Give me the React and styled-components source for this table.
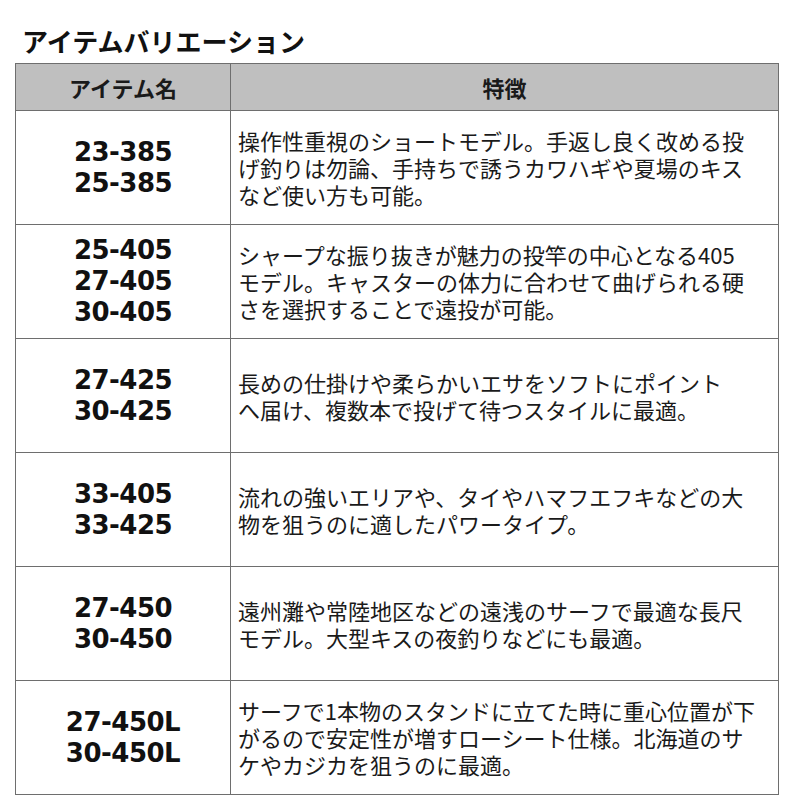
import styled, { createGlobalStyle } from 'styled-components';

const GlobalStyle = createGlobalStyle`
  body {
    margin: 0;
    background: #fff;
    font-family: 'Noto Sans CJK JP', 'Noto Sans', sans-serif;
    color: #111;
  }
`;

const Page = styled.div`
  width: 800px;
  padding: 26px 21px 0 15px;
  box-sizing: border-box;
`;

const Title = styled.h2`
  margin: 0 0 7px 7px;
  font-size: 26px;
  line-height: 30px;
  font-weight: 700;
  color: #111;
  letter-spacing: 0;
`;

const Table = styled.table`
  width: 764px;
  border-collapse: collapse;
  table-layout: fixed;
  border: 1px solid #6e6e6e;
`;

const HeadCell = styled.th`
  height: 46px;
  padding: 0;
  background: #bfbfbf;
  border: 1px solid #6e6e6e;
  font-size: 22px;
  font-weight: 700;
  color: #1a1a1a;
  text-align: center;
  vertical-align: middle;
  width: ${(p) => p.$width || 'auto'};
`;

const NameCell = styled.td`
  height: 113px;
  padding: 0;
  border: 1px solid #6e6e6e;
  text-align: center;
  vertical-align: middle;
`;

const ModelName = styled.div`
  font-family: 'DejaVu Sans', Verdana, sans-serif;
  font-weight: 700;
  font-size: 26px;
  letter-spacing: -0.5px;
  line-height: 31px;
  color: #111;
`;

const DescCell = styled.td`
  padding: 0 0 0 7px;
  border: 1px solid #6e6e6e;
  vertical-align: middle;
  text-align: left;
`;

const DescLine = styled.div`
  font-size: 22px;
  line-height: 27px;
  color: #1a1a1a;
  white-space: nowrap;
`;

const rows = [
  {
    names: ['23-385', '25-385'],
    lines: [
      '操作性重視のショートモデル。手返し良く改める投',
      'げ釣りは勿論、手持ちで誘うカワハギや夏場のキス',
      'など使い方も可能。',
    ],
  },
  {
    names: ['25-405', '27-405', '30-405'],
    lines: [
      'シャープな振り抜きが魅力の投竿の中心となる405',
      'モデル。キャスターの体力に合わせて曲げられる硬',
      'さを選択することで遠投が可能。',
    ],
  },
  {
    names: ['27-425', '30-425'],
    lines: [
      '長めの仕掛けや柔らかいエサをソフトにポイント',
      'へ届け、複数本で投げて待つスタイルに最適。',
    ],
  },
  {
    names: ['33-405', '33-425'],
    lines: [
      '流れの強いエリアや、タイやハマフエフキなどの大',
      '物を狙うのに適したパワータイプ。',
    ],
  },
  {
    names: ['27-450', '30-450'],
    lines: [
      '遠州灘や常陸地区などの遠浅のサーフで最適な長尺',
      'モデル。大型キスの夜釣りなどにも最適。',
    ],
  },
  {
    names: ['27-450L', '30-450L'],
    lines: [
      'サーフで1本物のスタンドに立てた時に重心位置が下',
      'がるので安定性が増すローシート仕様。北海道のサ',
      'ケやカジカを狙うのに最適。',
    ],
  },
];

export default function App() {
  return (
    <Page>
      <GlobalStyle />
      <Title>アイテムバリエーション</Title>
      <Table>
        <thead>
          <tr>
            <HeadCell $width="214px">アイテム名</HeadCell>
            <HeadCell>特徴</HeadCell>
          </tr>
        </thead>
        <tbody>
          {rows.map((row, i) => (
            <tr key={i}>
              <NameCell>
                {row.names.map((n) => (
                  <ModelName key={n}>{n}</ModelName>
                ))}
              </NameCell>
              <DescCell>
                {row.lines.map((line, j) => (
                  <DescLine key={j}>{line}</DescLine>
                ))}
              </DescCell>
            </tr>
          ))}
        </tbody>
      </Table>
    </Page>
  );
}
